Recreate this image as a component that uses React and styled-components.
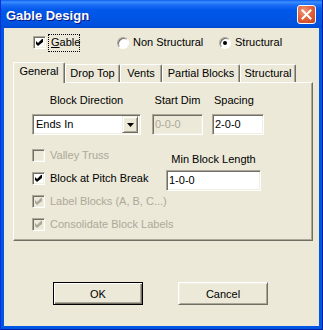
import React from 'react'
import styled, { createGlobalStyle } from 'styled-components'

const Global = createGlobalStyle`
  html, body { margin: 0; padding: 0; background: #ECE9D8; }
  body { font-family: "Liberation Sans", Arial, sans-serif; font-size: 11px; color: #000; }
`

const Window = styled.div`
  width: 323px;
  height: 330px;
  display: flex;
  flex-direction: column;
  overflow: hidden;
`

const TitleBar = styled.div`
  height: 28px;
  flex: none;
  display: flex;
  align-items: center;
  justify-content: space-between;
  padding: 0 7px 0 6px;
  background: linear-gradient(to bottom, #0A5BEF 0px, #3C8FFD 2px, #1A6CF5 5px, #0058EA 10px, #0054E3 20px, #0050DC 26px, #0046CC 28px);
  box-shadow: inset 1px 0 #0831D9, inset -1px 0 #001EA0;
`

const Title = styled.div`
  color: #fff;
  font-weight: bold;
  font-size: 13px;
  padding-top: 2px;
  text-shadow: 1px 1px #0A1883;
`

const CloseButton = styled.div`
  width: 19px;
  height: 19px;
  box-sizing: border-box;
  border: 1px solid #fff;
  border-radius: 3px;
  background: radial-gradient(circle at 35% 30%, #F09A7C 0%, #E2643E 45%, #C4401A 100%);
  display: flex;
  align-items: center;
  justify-content: center;
`

const Frame = styled.div`
  flex: 1;
  display: flex;
  padding: 0 4px 4px;
  background: #0055E5;
  box-shadow: inset 1px 0 #0831D9, inset -1px 0 #001EA0, inset 0 -1px #001EA0;
`

const Body = styled.div`
  flex: 1;
  background: #ECE9D8;
  display: flex;
  flex-direction: column;
  padding-top: 6px;
`

const TopRow = styled.div`
  display: flex;
  align-items: center;
  height: 17px;
  padding-left: 29px;
`

const Option = styled.div`
  width: ${p => p.$w}px;
  display: flex;
  align-items: center;
  flex: none;
`

const Box = styled.div`
  width: 13px;
  height: 13px;
  box-sizing: border-box;
  flex: none;
  border: 1px solid;
  border-color: #ACA899 #fff #fff #ACA899;
  box-shadow: inset 1px 1px #716F64, inset -1px -1px #F1EFE2;
  background: ${p => (p.$disabled ? '#ECE9D8' : '#fff')};
  display: flex;
  align-items: center;
  justify-content: center;
`

const Radio = styled.div`
  width: 12px;
  height: 12px;
  box-sizing: border-box;
  flex: none;
  border-radius: 50%;
  border: 1px solid;
  border-color: #ACA899 #fff #fff #ACA899;
  box-shadow: inset 1px 1px #716F64;
  background: #fff;
  display: flex;
  align-items: center;
  justify-content: center;
  margin-top: 1px;
`

const Dot = styled.div`
  width: 4px;
  height: 4px;
  border-radius: 50%;
  background: #000;
`

const Label = styled.span`
  color: ${p => (p.$disabled ? '#ACA899' : '#000')};
  margin-left: ${p => p.$gap ?? 5}px;
  white-space: nowrap;
  line-height: 13px;
`

const Focus = styled.span`
  margin-left: 3px;
  padding: 1px 2px 2px 2px;
  outline: 1px dotted #000;
  line-height: 13px;
  width: 26px;
`

const TabStrip = styled.div`
  display: flex;
  align-items: flex-end;
  height: 20px;
  margin: 11px 0 0 9px;
  position: relative;
  z-index: 1;
`

const Tab = styled.div`
  width: ${p => p.$w}px;
  height: ${p => (p.$active ? 21 : 18)}px;
  box-sizing: border-box;
  flex: none;
  text-align: center;
  line-height: ${p => (p.$active ? 17 : 16)}px;
  background: #ECE9D8;
  border: 1px solid;
  border-bottom: none;
  border-color: #fff #716F64 #fff #fff;
  box-shadow: inset -1px 0 #ACA899;
  border-radius: 2px 2px 0 0;
  margin-bottom: ${p => (p.$active ? -1 : 0)}px;
`

const Panel = styled.div`
  height: 159px;
  box-sizing: border-box;
  margin: 0 6px 0 9px;
  border: 1px solid;
  border-color: #fff #716F64 #716F64 #fff;
  box-shadow: inset -1px -1px #ACA899;
  padding: 11px 0 0 18px;
`

const FieldGrid = styled.div`
  display: grid;
  grid-template-columns: 109px 51px 50px;
  column-gap: 11px;
  & > :nth-child(3) { margin-left: -2px; }
`

const Field = styled.div`
  display: flex;
  flex-direction: column;
`

const Caption = styled.div`
  line-height: 13px;
  height: 13px;
  text-align: ${p => p.$align || 'center'};
  padding-left: ${p => (p.$align === 'left' ? 2 : 0)}px;
  margin-bottom: ${p => p.$mb ?? 7}px;
  white-space: nowrap;
`

const Input = styled.div`
  height: 21px;
  box-sizing: border-box;
  border: 1px solid;
  border-color: #ACA899 #fff #fff #ACA899;
  box-shadow: inset 1px 1px #716F64, inset -1px -1px #F1EFE2;
  background: ${p => (p.$disabled ? '#ECE9D8' : '#fff')};
  color: ${p => (p.$disabled ? '#ACA899' : '#000')};
  padding: 0 2px;
  line-height: 19px;
  width: ${p => (p.$w ? `${p.$w}px` : 'auto')};
`

const Select = styled(Input)`
  display: flex;
  align-items: center;
  justify-content: space-between;
  padding: 0 2px 0 3px;
`

const DropButton = styled.div`
  width: 16px;
  height: 17px;
  box-sizing: border-box;
  background: #ECE9D8;
  border: 1px solid;
  border-color: #F1EFE2 #716F64 #716F64 #F1EFE2;
  box-shadow: inset 1px 1px #fff, inset -1px -1px #ACA899;
  display: flex;
  align-items: center;
  justify-content: center;
`

const Lower = styled.div`
  display: grid;
  grid-template-columns: 134px 95px;
  margin-top: 9px;
`

const CheckList = styled.div`
  display: flex;
  flex-direction: column;
`

const CheckRow = styled.div`
  height: 23px;
  display: flex;
  align-items: center;
`

const RightCol = styled.div`
  padding-top: 9px;
  display: flex;
  flex-direction: column;
`

const ButtonRow = styled.div`
  display: flex;
  justify-content: center;
  gap: 35px;
  margin-top: 41px;
  padding-right: 2px;
`

const Button = styled.div`
  width: 90px;
  height: 23px;
  box-sizing: border-box;
  background: #ECE9D8;
  border: 1px solid;
  border-color: ${p => (p.$default ? '#000' : '#fff #716F64 #716F64 #fff')};
  box-shadow: ${p =>
    p.$default
      ? 'inset 1px 1px #fff, inset -1px -1px #716F64, inset -2px -2px #ACA899'
      : 'inset 1px 1px #F1EFE2, inset -1px -1px #ACA899'};
  display: flex;
  align-items: center;
  justify-content: center;
`

const Check = ({ disabled }) => (
  <svg width="7" height="7" viewBox="0 0 7 7">
    <path d="M0 2 L2 4 L6 0 L7 0 L7 3 L2 7 L0 5 Z" fill={disabled ? '#ACA899' : '#000'} />
  </svg>
)

const CheckItem = ({ label, checked, disabled }) => (
  <CheckRow>
    <Box $disabled={disabled}>{checked && <Check disabled={disabled} />}</Box>
    <Label $disabled={disabled}>{label}</Label>
  </CheckRow>
)

const tabs = [
  ['General', 52, true],
  ['Drop Top', 55],
  ['Vents', 42],
  ['Partial Blocks', 78],
  ['Structural', 56],
]

export default function App() {
  return (
    <>
      <Global />
      <Window>
        <TitleBar>
          <Title>Gable Design</Title>
          <CloseButton>
            <svg width="11" height="11" viewBox="0 0 11 11">
              <path d="M1.5 1.5 L9.5 9.5 M9.5 1.5 L1.5 9.5" stroke="#fff" strokeWidth="2" strokeLinecap="square" />
            </svg>
          </CloseButton>
        </TitleBar>
        <Frame>
          <Body>
            <TopRow>
              <Option $w={84}>
                <Box><Check /></Box>
                <Focus><u>G</u>able</Focus>
              </Option>
              <Option $w={102}>
                <Radio />
                <Label $gap={4}>Non Structural</Label>
              </Option>
              <Option $w={90}>
                <Radio><Dot /></Radio>
                <Label $gap={4}>Structural</Label>
              </Option>
            </TopRow>

            <TabStrip>
              {tabs.map(([name, w, active]) => (
                <Tab key={name} $w={w} $active={active}>{name}</Tab>
              ))}
            </TabStrip>
            <Panel>
              <FieldGrid>
                <Field>
                  <Caption>Block Direction</Caption>
                  <Select>
                    <span>Ends In</span>
                    <DropButton>
                      <svg width="7" height="4" viewBox="0 0 7 4">
                        <path d="M0 0 H7 L3.5 4 Z" fill="#000" />
                      </svg>
                    </DropButton>
                  </Select>
                </Field>
                <Field>
                  <Caption>Start Dim</Caption>
                  <Input $disabled>0-0-0</Input>
                </Field>
                <Field>
                  <Caption $align="left">Spacing</Caption>
                  <Input>2-0-0</Input>
                </Field>
              </FieldGrid>

              <Lower>
                <CheckList>
                  <CheckItem label="Valley Truss" disabled />
                  <CheckItem label="Block at Pitch Break" checked />
                  <CheckItem label="Label Blocks (A, B, C...)" checked disabled />
                  <CheckItem label="Consolidate Block Labels" checked disabled />
                </CheckList>
                <RightCol>
                  <Caption $mb={4}>Min Block Length</Caption>
                  <Input>1-0-0</Input>
                </RightCol>
              </Lower>
            </Panel>

            <ButtonRow>
              <Button $default>OK</Button>
              <Button>Cancel</Button>
            </ButtonRow>
          </Body>
        </Frame>
      </Window>
    </>
  )
}
